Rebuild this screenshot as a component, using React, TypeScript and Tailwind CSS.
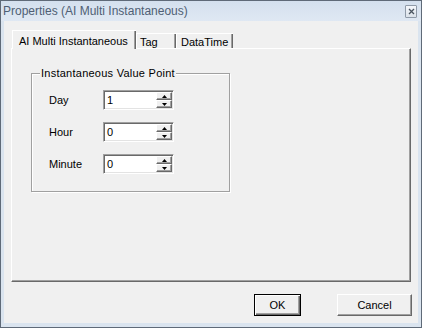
import React from 'react';

const font = "font-['Liberation_Sans',Arial,sans-serif]";

function Arrow({ up }: { up?: boolean }) {
  return (
    <svg width="5" height="3" viewBox="0 0 5 3" className="block">
      {up ? <polygon points="2.5,0 5,3 0,3" fill="#000" /> : <polygon points="0,0 5,0 2.5,3" fill="#000" />}
    </svg>
  );
}

function SpinBtn({ up }: { up?: boolean }) {
  return (
    <div className="flex h-[8px] items-center justify-center border border-t-white border-l-white border-b-[#696969] border-r-[#696969] bg-[#f0f0f0] shadow-[inset_-1px_-1px_0_#a0a0a0]">
      <Arrow up={up} />
    </div>
  );
}

function SpinBox({ value }: { value: string }) {
  return (
    <div className="flex h-[20px] w-[71px] border border-t-[#a0a0a0] border-l-[#a0a0a0] border-b-white border-r-white bg-white p-px shadow-[inset_1px_1px_0_#696969,inset_-1px_-1px_0_#e3e3e3]">
      <span className="flex-1 pl-[2px] text-[11px] leading-[17px] text-black">{value}</span>
      <div className="flex w-[16px] flex-col">
        <SpinBtn up />
        <SpinBtn />
      </div>
    </div>
  );
}

function Row({ label, value }: { label: string; value: string }) {
  return (
    <div className="flex h-[20px] items-center">
      <span className="w-[54px] pt-px text-[11px] text-black">{label}</span>
      <SpinBox value={value} />
    </div>
  );
}

export default function App() {
  return (
    <div className={`${font} flex h-[328px] w-[422px] flex-col border border-[#5f6a78] bg-[#dae4ef]`}>
      {/* title bar */}
      <div className="flex h-[20px] items-center justify-between bg-gradient-to-b from-[#d4e0ee] to-[#dfe8f3] pl-[2px] pr-[4px]">
        <span className="text-[12px] text-[#4f5f74]">Properties (AI Multi Instantaneous)</span>
        <div className="flex h-[13px] w-[12px] items-center justify-center rounded-[1px] border border-[#8f9aa8] bg-gradient-to-b from-[#f4f7fb] to-[#dbe2ea]">
          <svg width="7" height="7" viewBox="0 0 7 7">
            <path d="M1 1 L6 6 M6 1 L1 6" stroke="#4a5460" strokeWidth="1.3" />
          </svg>
        </div>
      </div>

      {/* client */}
      <div className="mx-[3px] mb-[4px] flex flex-1 flex-col bg-[#f0f0f0] pt-[9px]">
        <div className="relative z-10 -mb-px ml-[8px] flex h-[19px] items-end text-[11px] text-black">
          <div className="h-[19px] w-[124px] border-t border-l border-t-white border-l-white bg-[#f0f0f0] pl-[6px] pt-[2px] shadow-[inset_-1px_0_0_#696969,inset_-2px_0_0_#a0a0a0]">
            AI Multi Instantaneous
          </div>
          <div className="mb-px h-[15px] w-[40px] overflow-hidden border-t border-l border-t-white border-l-white pl-[3px] leading-[17px] shadow-[inset_-1px_0_0_#696969,inset_-2px_0_0_#a0a0a0]">
            Tag
          </div>
          <div className="mb-px h-[15px] w-[57px] overflow-hidden border-t border-l border-t-white border-l-white pl-[4px] leading-[17px] shadow-[inset_-1px_0_0_#696969,inset_-2px_0_0_#a0a0a0]">
            DataTime
          </div>
        </div>

        <div className="ml-[7px] h-[234px] w-[400px] border border-t-white border-l-white border-b-[#696969] border-r-[#696969] shadow-[inset_-1px_-1px_0_#a0a0a0]">
          <div className="relative ml-[19px] mt-[24px] h-[119px] w-[199px] border border-[#a0a0a0] pl-[17px] pt-[16px] shadow-[1px_1px_0_#fff,inset_1px_1px_0_#fff]">
            <span className="absolute -top-[7px] left-[8px] bg-[#f0f0f0] px-px text-[11px] leading-[13px] tracking-[0.25px] text-black">
              Instantaneous Value Point
            </span>
            <div className="flex flex-col gap-[12px]">
              <Row label="Day" value="1" />
              <Row label="Hour" value="0" />
              <Row label="Minute" value="0" />
            </div>
          </div>
        </div>

        <div className="mr-[6px] mt-[12px] flex justify-end gap-[36px] text-[11px] text-black">
          <button className="h-[22px] w-[47px] border border-black bg-[#f0f0f0] shadow-[inset_1px_1px_0_#fff,inset_-1px_-1px_0_#696969,inset_-2px_-2px_0_#a0a0a0]">
            OK
          </button>
          <button className="h-[22px] w-[75px] border border-t-white border-l-white border-b-[#696969] border-r-[#696969] bg-[#f0f0f0] shadow-[inset_-1px_-1px_0_#a0a0a0]">
            Cancel
          </button>
        </div>
      </div>
    </div>
  );
}
